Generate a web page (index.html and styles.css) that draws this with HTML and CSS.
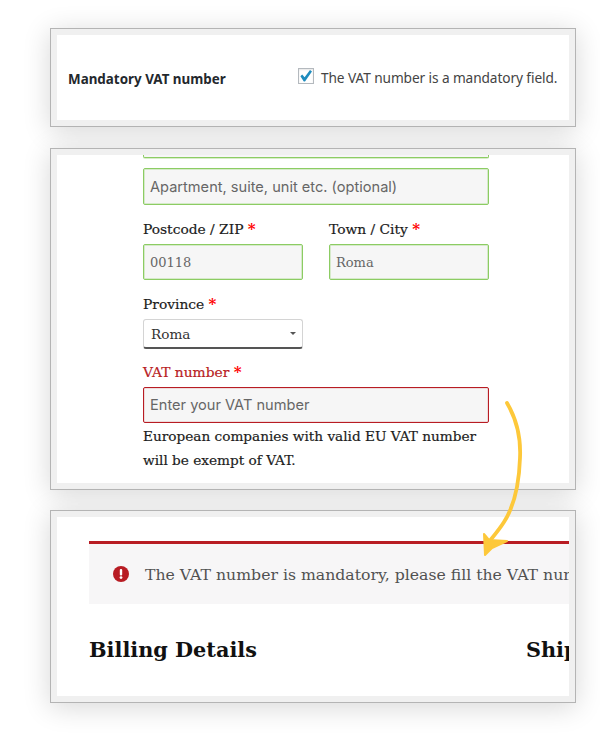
FILE: index.html
```html
<!DOCTYPE html>
<html>
    <head>
    <meta charset="utf-8">
    <title>Mandatory VAT number</title>
    <link rel="stylesheet" href="styles.css">
    </head>
    <body>
        <div class="panel panel-setting">
            <div class="inner setting">
                <div class="setting-name">Mandatory VAT number</div>
                <label class="setting-check">
                    <span class="checkbox">
                        <svg width="14" height="14" viewBox="0 0 14 14"><path d="M1.4 7.2 L3.2 5.6 L5.6 8.2 L11 1 L13 2.4 L6 12.6 L4.8 12.6 Z" fill="#1e8cbe"/></svg>
                    </span>
                    The VAT number is a mandatory field.
                </label>
            </div>
        </div>

        <div class="panel panel-form">
            <div class="inner form">
                <div class="field cut-field"></div>
                <div class="field input-ok montserrat">Apartment, suite, unit etc. (optional)</div>

                <div class="row">
                    <div class="col">
                        <div class="label">Postcode / ZIP <span class="req">*</span></div>
                        <div class="field input-ok">00118</div>
                    </div>
                    <div class="col">
                        <div class="label">Town / City <span class="req">*</span></div>
                        <div class="field input-ok">Roma</div>
                    </div>
                </div>

                <div class="label label-province">Province <span class="req">*</span></div>
                <div class="select">
                    <span>Roma</span>
                    <span class="caret"></span>
                </div>

                <div class="label label-vat">VAT number <span class="req">*</span></div>
                <div class="field input-bad montserrat">Enter your VAT number</div>
                <p class="help">European companies with valid EU VAT number will be exempt of VAT.</p>
            </div>
        </div>

        <div class="panel panel-notice">
            <div class="inner checkout">
                <div class="notice">
                    <svg class="notice-icon" width="16" height="16" viewBox="0 0 16 16">
                        <circle cx="8" cy="8" r="8" fill="#b81c23"/>
                        <rect x="6.8" y="3" width="2.4" height="6.4" rx="1" fill="#fff"/>
                        <circle cx="8" cy="11.6" r="1.4" fill="#fff"/>
                    </svg>
                    <span>The VAT number is mandatory, please fill the VAT number field.</span>
                </div>
                <div class="titles">
                    <h3>Billing Details</h3>
                    <h3 class="shipping">Shipping Details</h3>
                </div>
            </div>
        </div>

        <!-- hand drawn arrow sits over the panels -->
        <svg class="arrow" width="60" height="170" viewBox="0 0 60 170">
            <path d="M27 13 C37 30 41 48 40 68 C39 98 33 118 24 132 C19 140 12 148 8 153" fill="none" stroke="#fdc83a" stroke-width="3.8" stroke-linecap="round"/>
            <path d="M4 144 L9 150 L27 151 L12 158 L5 165 Z" fill="#fdc83a" stroke="#fdc83a" stroke-width="2" stroke-linejoin="round"/>
        </svg>
    </body>
</html>
```

FILE: styles.css
```css
html, body {
    margin: 0;
    padding: 0;
}

body {
    position: relative;
    height: 743px;
    overflow: hidden;
    background-color: #fff;
    padding: 28px 24px 0 50px;
    box-sizing: border-box;
    display: flex;
    flex-direction: column;
    gap: 21px;
    font-family: "DejaVu Serif", serif;
    color: #1c1c1c;
}

.panel {
    box-sizing: border-box;
    border: 1px solid #b4b4b4;
    background-color: #f0f0f0;
    padding: 6px;
    box-shadow: 0 4px 26px rgba(0, 0, 0, 0.16);
}

.panel-setting { height: 99px; }
.panel-form { height: 342px; }
.panel-notice { height: 193px; margin-top: -1px; }

.inner {
    background-color: #fff;
    height: 100%;
    overflow: hidden;
    box-sizing: border-box;
}

/* top box */
.setting {
    display: flex;
    padding: 33px 0 0 11px;
}

.setting-name {
    width: 230px;
    padding-top: 2px;
    font-family: "Noto Sans", sans-serif;
    font-weight: 700;
    font-size: 13.4px;
    line-height: 19px;
    color: #23282d;
}

.setting-check {
    display: flex;
    align-items: flex-start;
    gap: 7px;
    font-family: "Noto Sans", sans-serif;
    font-size: 13.7px;
    line-height: 19px;
    color: #444;
    white-space: nowrap;
    letter-spacing: -0.1px;
}

.checkbox {
    box-sizing: border-box;
    width: 16px;
    height: 16px;
    border: 1px solid #b4b9be;
    background-color: #fff;
    box-shadow: inset 0 1px 2px rgba(0, 0, 0, 0.1);
    display: flex;
    align-items: center;
    justify-content: center;
    flex: none;
}

/* form box */
.form {
    padding: 0 80px 0 86px;
    font-size: 13.6px;
}

.field {
    box-sizing: border-box;
    height: 37px;
    padding: 0 6px;
    display: flex;
    align-items: center;
    background-color: #f6f6f6;
    border-radius: 2px;
    color: #666;
    font-size: 13px;
}

.cut-field {
    height: 3px;
    border-bottom: 1px solid #8ccc63;
    border-left: 1px solid #8ccc63;
    border-right: 1px solid #8ccc63;
    border-radius: 0 0 2px 2px;
    margin-bottom: 10px;
    box-shadow: 0 1px 0 rgba(140, 204, 99, 0.35);
}

.input-ok {
    border: 1px solid #8ccc63;
    box-shadow: inset 0 0 0 1px rgba(140, 204, 99, 0.3);
}

.input-bad {
    border: 1px solid #b81c23;
    box-shadow: inset 0 0 0 1px rgba(184, 28, 35, 0.12);
    height: 36px;
}

.montserrat {
    font-family: "Inter", sans-serif;
    font-size: 14.6px;
}

.row {
    display: flex;
    gap: 26px;
    margin-top: 13px;
}

.col {
    flex: 1;
}

.col:first-child {
    flex: 0 0 160px;
}

.col .field {
    height: 36px;
}

.label {
    font-size: 13.8px;
    line-height: 22px;
    margin-bottom: 4px;
    color: #1c1c1c;
    -webkit-text-stroke: 0.2px #1c1c1c;
}

.req {
    color: #f00;
    font-size: 15px;
    line-height: 0;
    font-weight: 700;
    -webkit-text-stroke: 0;
}

.label-province {
    margin-top: 13px;
    margin-bottom: 4px;
}

.select {
    box-sizing: border-box;
    width: 160px;
    height: 30px;
    display: flex;
    align-items: center;
    justify-content: space-between;
    padding: 0 6px 0 7px;
    background-color: #fff;
    border: 1px solid #d4d4d4;
    border-bottom: 2px solid #555;
    border-radius: 3px;
    font-size: 13.6px;
    color: #333;
}

.caret {
    width: 0;
    height: 0;
    border-left: 3px solid transparent;
    border-right: 3px solid transparent;
    border-top: 3px solid #555;
}

.label-vat {
    margin-top: 12px;
    margin-bottom: 4px;
    color: #b81c23;
    -webkit-text-stroke: 0.2px #b81c23;
}

.help {
    margin: 1px 0 0 0;
    font-size: 13.65px;
    line-height: 24px;
    color: #1c1c1c;
    -webkit-text-stroke: 0.2px #1c1c1c;
}

/* checkout notice box */
.checkout {
    padding: 24px 0 0 32px;
}

.notice {
    box-sizing: border-box;
    height: 63px;
    width: 640px;
    display: flex;
    align-items: center;
    padding-left: 24px;
    gap: 16px;
    background-color: #f7f6f7;
    border-top: 3px solid #b81c23;
    color: #515151;
    font-size: 15.7px;
    white-space: nowrap;
}

.notice-icon {
    flex: none;
}

.titles {
    display: flex;
    gap: 269px;
    margin-top: 28px;
    white-space: nowrap;
}

.titles h3 {
    margin: 0;
    font-size: 20.8px;
    line-height: 36px;
    font-weight: 700;
    color: #111;
}

.arrow {
    position: absolute;
    left: 480px;
    top: 390px;
}
```
